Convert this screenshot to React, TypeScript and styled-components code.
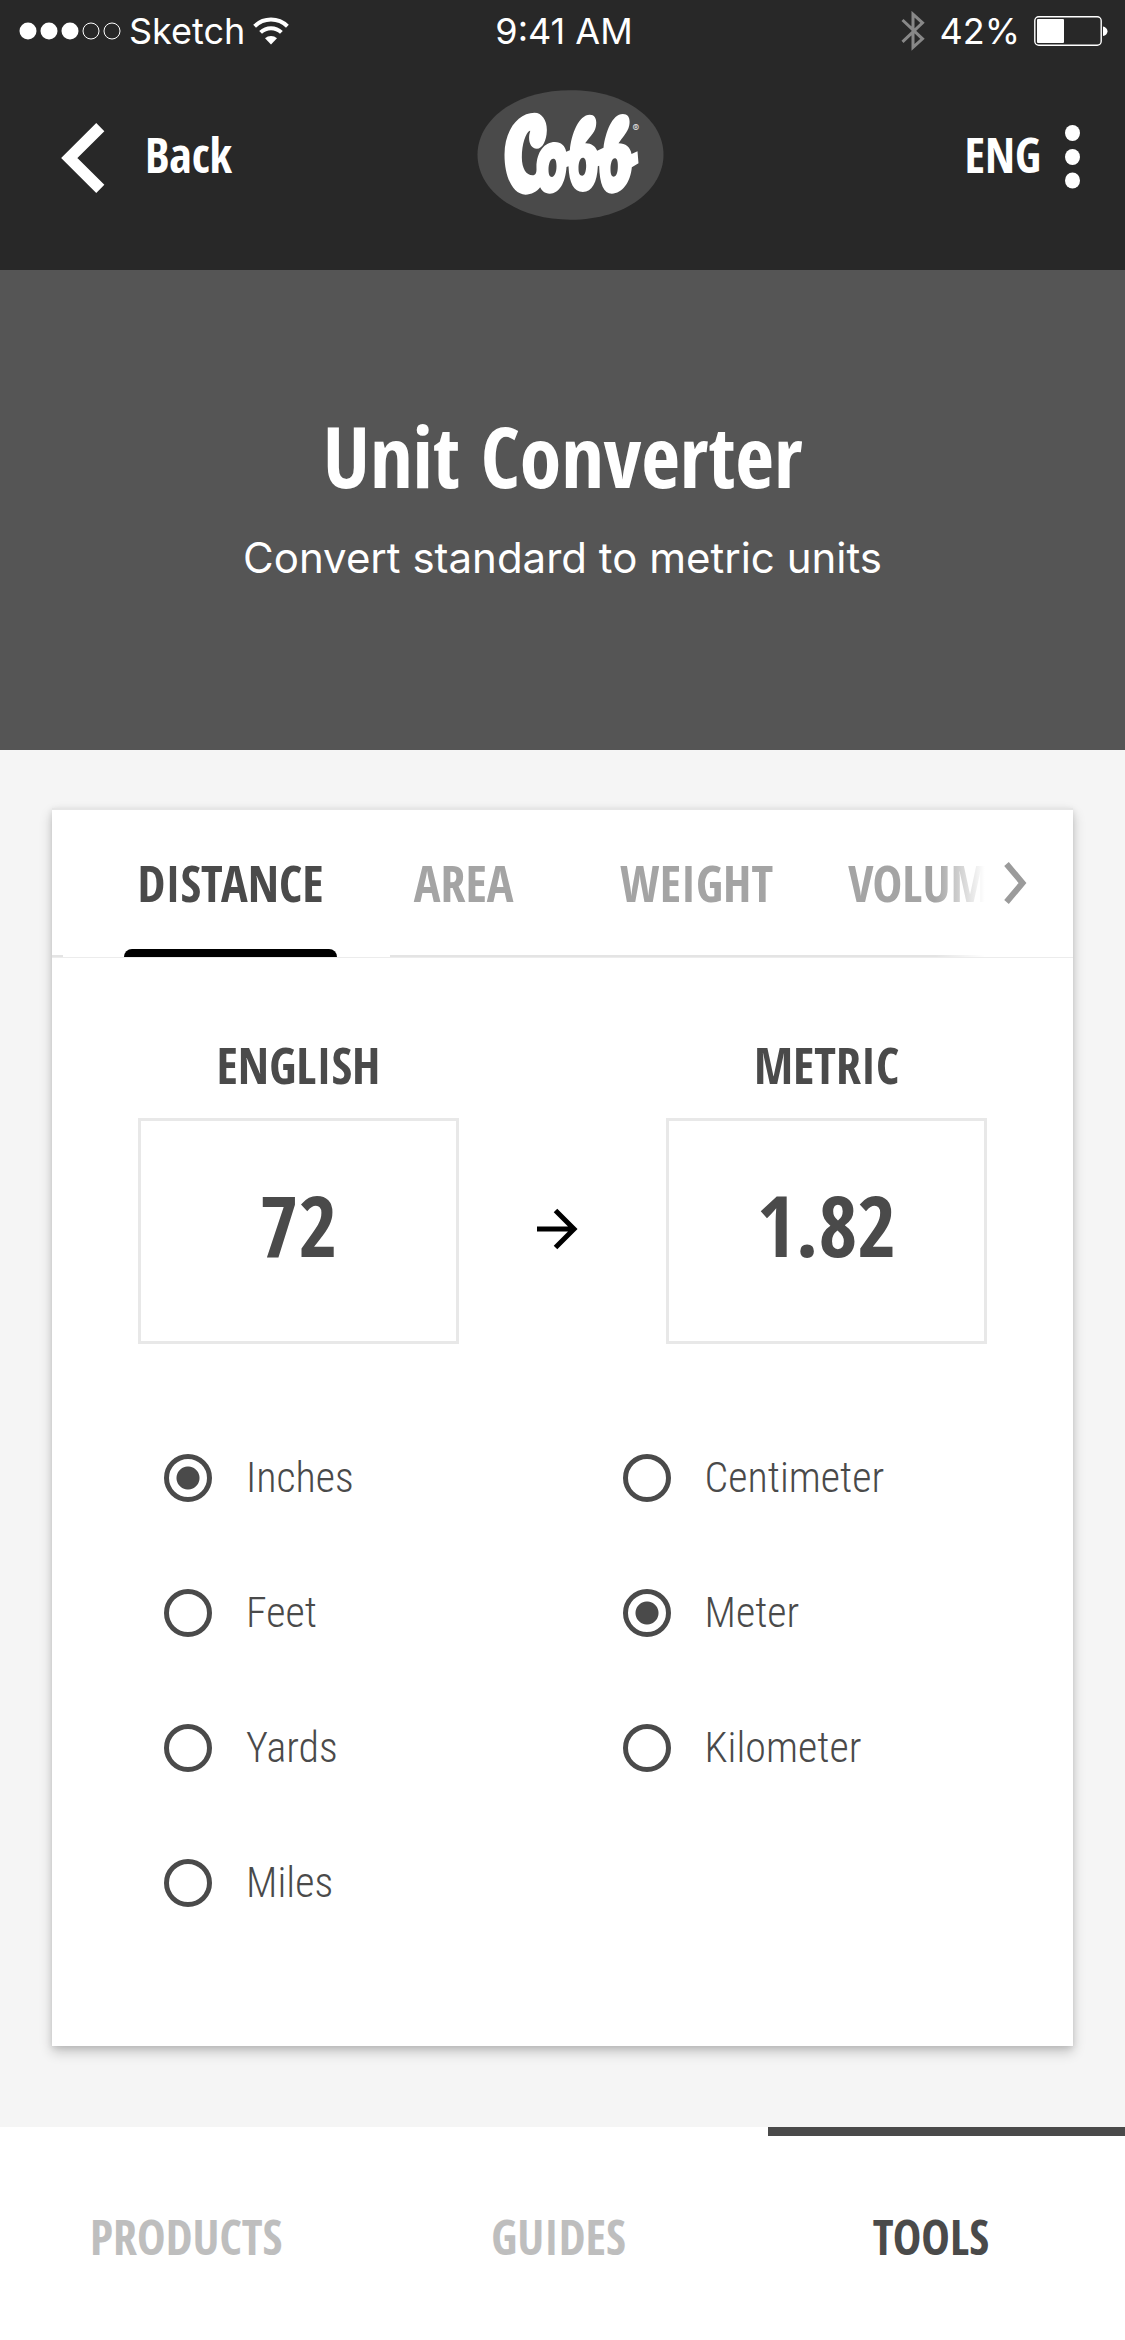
import React, { useState } from 'react';
import styled, { createGlobalStyle } from 'styled-components';

const sans = 'Inter, "Liberation Sans", sans-serif';
const condensed = '"Open Sans Condensed", "Roboto Condensed", sans-serif';
const narrow = '"Roboto Condensed", Roboto, sans-serif';
const ink = '#4a4a4a';

const GlobalStyle = createGlobalStyle`
  *, *::before, *::after { box-sizing: border-box; }
  body { margin: 0; background: #f5f5f5; font-family: ${sans}; }
  h1, h2, p { margin: 0; font-weight: inherit; }
  button, input { font: inherit; color: inherit; margin: 0; padding: 0; border: 0; background: none; border-radius: 0; }
  button { cursor: pointer; }
  svg { display: block; flex: none; }
`;

const Page = styled.div`
  display: flex;
  flex-direction: column;
  min-height: 100vh;
`;

const Header = styled.header`
  background: #282828;
  color: #fff;
  padding-bottom: 22px;
`;

const StatusBar = styled.div`
  display: grid;
  grid-template-columns: 1fr auto 1fr;
  align-items: center;
  height: 62px;
  padding: 0 16px 0 19px;
  font-size: 36px;
  line-height: 44px;
`;

const StatusGroup = styled.div<{ $end?: boolean }>`
  display: flex;
  align-items: center;
  justify-content: ${p => (p.$end ? 'flex-end' : 'flex-start')};
  gap: ${p => (p.$end ? 14 : 8)}px;
`;

const Toolbar = styled.div`
  display: grid;
  grid-template-columns: 1fr auto 1fr;
  align-items: center;
  height: 186px;
  padding: 0 45px 0 61px;
`;

const ToolbarButton = styled.button<{ $gap: number; $end?: boolean }>`
  display: flex;
  align-items: center;
  gap: ${p => p.$gap}px;
  justify-self: ${p => (p.$end ? 'end' : 'start')};
  font: 700 48px/60px ${condensed};
`;

const Hero = styled.section`
  display: flex;
  flex-direction: column;
  align-items: center;
  gap: 20px;
  height: 480px;
  padding-top: 130px;
  background: #555;
  color: #fff;
  text-align: center;
`;

const Title = styled.h1`
  font: 700 84px/112px ${condensed};
`;

const Subtitle = styled.p`
  font-size: 42px;
  line-height: 52px;
`;

const Main = styled.main`
  flex: 1;
  padding: 58px 52px 81px;
`;

const Card = styled.section`
  background: #fff;
  box-shadow: 0 6px 12px rgba(0, 0, 0, 0.2), 0 2px 6px rgba(0, 0, 0, 0.1);
`;

const TabBar = styled.div`
  position: relative;
  border-top: 2px solid #e6e6e6;
  border-bottom: 1px solid #ececec;
  background: linear-gradient(to right, #e4e4e4 11px, transparent 11px, transparent 338px, #e4e4e4 338px)
    bottom / 100% 2px no-repeat;
`;

const TabList = styled.div`
  display: flex;
  height: 147px;
  padding-left: 62px;
  overflow: hidden;
`;

const Tab = styled.button<{ $active: boolean }>`
  flex: 0 0 24.3%;
  display: flex;
  flex-direction: column;
  align-items: center;
  padding: 41px 10px 0;
  font: 700 50px/64px ${condensed};
  color: ${p => (p.$active ? ink : '#a4a4a4')};

  &::after {
    content: '';
    align-self: stretch;
    height: 8px;
    margin-top: auto;
    border-radius: 8px 8px 0 0;
    background: ${p => (p.$active ? '#000' : 'transparent')};
  }
`;

const MoreTabs = styled.button`
  position: absolute;
  top: 0;
  right: 0;
  bottom: 0;
  width: 138px;
  display: flex;
  align-items: center;
  justify-content: flex-end;
  padding: 0 46px 2px 0;
  background: linear-gradient(to right, rgba(255, 255, 255, 0), #fff 36%);
`;

const Converter = styled.div`
  display: flex;
  align-items: flex-end;
  padding: 77px 86px 0;
`;

const Quantity = styled.div`
  flex: 1;
  min-width: 0;
  display: flex;
  flex-direction: column;
  gap: 23px;
  color: ${ink};
`;

const QuantityLabel = styled.label`
  font: 700 50px/60px ${condensed};
  text-align: center;
`;

const QuantityInput = styled.input`
  width: 100%;
  height: 226px;
  padding-bottom: 14px;
  border: 3px solid #e8e8e8;
  font: 700 84px/112px ${condensed};
  text-align: center;
`;

const ArrowCell = styled.div`
  flex: 0 0 207px;
  height: 226px;
  padding-bottom: 4px;
  display: flex;
  align-items: center;
  justify-content: center;
`;

const Units = styled.div`
  display: grid;
  grid-template-columns: 1fr 1fr;
  gap: 8px;
  padding: 110px 0 139px 112px;
`;

const UnitGroup = styled.div`
  display: flex;
  flex-direction: column;
  gap: 87px;
`;

const UnitOption = styled.label`
  display: flex;
  align-items: center;
  gap: 34px;
  height: 48px;
  color: ${ink};
  font: 300 42px/48px ${narrow};
  cursor: pointer;
`;

const Radio = styled.input`
  appearance: none;
  flex: none;
  width: 48px;
  height: 48px;
  border: 5px solid ${ink};
  border-radius: 50%;

  &:checked {
    background: radial-gradient(circle, ${ink} 11px, transparent 12px);
  }
`;

const BottomNav = styled.nav`
  position: relative;
  display: grid;
  grid-template-columns: repeat(3, 1fr);
  height: 213px;
  padding-right: 8px;
  background: #fff;

  &::before {
    content: '';
    position: absolute;
    top: 0;
    right: 0;
    width: 357px;
    height: 9px;
    background: ${ink};
  }
`;

const NavLink = styled.a<{ $active?: boolean }>`
  display: flex;
  align-items: center;
  justify-content: center;
  padding-top: 6px;
  font: 700 48px/60px ${condensed};
  color: ${p => (p.$active ? ink : '#bebebe')};
  text-decoration: none;
`;

const SignalDots = () => (
  <svg width="102" height="18" viewBox="0 0 102 18" aria-hidden="true">
    {[0, 1, 2, 3, 4].map(i => (
      <circle key={i} cx={9 + i * 21} cy="9" r={i < 3 ? 8.5 : 8} fill={i < 3 ? '#fff' : 'none'} stroke="#fff" strokeWidth={i < 3 ? 0 : 1} />
    ))}
  </svg>
);

const Wifi = () => (
  <svg width="36" height="28" viewBox="0 0 36 28" fill="none" stroke="#fff" strokeWidth="4" aria-hidden="true">
    <path d="M1.6 9.2a23.5 23.5 0 0 1 32.8 0" />
    <path d="M7.6 15.4a15 15 0 0 1 20.8 0" />
    <path d="M18 27.5l-6-6.2a8.8 8.8 0 0 1 12 0z" fill="#fff" stroke="none" />
  </svg>
);

const Bluetooth = () => (
  <svg width="24" height="40" viewBox="0 0 24 40" fill="none" stroke="#888" strokeWidth="3" aria-hidden="true">
    <path d="M1.5 9 21.5 27.8 12 36.4V3.2l9.5 8.6L1.5 30.8" />
  </svg>
);

const Battery = () => (
  <svg width="75" height="30" viewBox="0 0 75 30" aria-hidden="true">
    <rect x="0.8" y="0.8" width="66.4" height="28.4" rx="4" fill="none" stroke="#fff" strokeWidth="1.4" />
    <rect x="3" y="3" width="27" height="24" rx="1" fill="#fff" />
    <path d="M69 10.5c2.5.3 4.5 2.5 4.5 4.800s-2 4.500-4.500 4.800z" fill="#fff" />
  </svg>
);

const BackIcon = () => (
  <svg width="44" height="76" viewBox="0 -6 44 76" fill="none" stroke="#fff" strokeWidth="11.5" aria-hidden="true">
    <path d="M39.3 4.2 8.300 35l31 30.800" />
  </svg>
);

const DotsIcon = () => (
  <svg width="15" height="68" viewBox="0 -4 15 68" fill="#fff" aria-hidden="true">
    {[8, 32, 55.5].map(y => <ellipse key={y} cx="7.5" cy={y} rx="7.5" ry="8" />)}
  </svg>
);

const Logo = () => (
  <svg width="187" height="130" viewBox="110 268 560 390" role="img" aria-label="Cobb">
    <path fill="#4a4a4a" d="M390 269C560 269 669 360 669 462S560 657 390 657 111 564 111 462s109-193 279-193z" />
    <path
      fill="#fff"
      fillRule="evenodd"
      d="M282 336c23 0 38 24 37 54s-13 54-30 54-25-19-23-39c1-9 5-15 2-15-12 5-24 40-24 80 0 35 14 54 32 54 10 0 12-9 12-19-2-50 24-81 55-81 19 0 31 12 34 29l11-4c4-49 27-107 60-107 17 0 22 16 18 36s-22 34-32 50c18-1 31 10 36 22l19-9c6-46 26-101 58-101 18 0 23 15 19 35s-22 37-32 53c21 0 36 12 39 32l18-8 3 36-20 12c-4 45-29 79-60 79-24 0-37-29-38-84l-4 2c-2 48-17 77-45 77-27 0-41-26-43-77l-6 2c-3 49-23 80-50 80-16 0-24-9-29-19-9 13-27 22-44 22-37 0-63-52-63-120 0-72 40-126 90-126z
         M338 474c-8 0-14 14-14 32s4 23 10 23c8 0 14-14 14-32s-4-23-10-23z
         M427 471c-8 0-13 13-13 31s4 23 11 23 12-12 12-30-4-24-10-24z
         M523 473c-8 0-13 14-13 32s4 23 10 23c8 0 12-14 12-31s-3-24-9-24z"
    />
    <text x="586" y="395" fill="#e4e4e4" fontFamily={sans} fontSize="30" textAnchor="middle">®</text>
  </svg>
);

const MoreIcon = () => (
  <svg width="23" height="42" viewBox="0 0 23 42" fill="none" stroke="#9b9b9b" strokeWidth="6" aria-hidden="true">
    <path d="M2.5 2 18.5 21 2.5 40" />
  </svg>
);

const ArrowIcon = () => (
  <svg width="52" height="42" viewBox="0 0 52 42" fill="none" stroke="#000" strokeWidth="5" aria-hidden="true">
    <path d="M0 21h37M18.5 2.500 37 21 18.500 39.500" />
  </svg>
);

const TABS = ['DISTANCE', 'AREA', 'WEIGHT', 'VOLUME'];

const METERS: Record<string, number> = {
  Inches: 0.0254,
  Feet: 0.3048,
  Yards: 0.9144,
  Miles: 1609.344,
  Centimeter: 0.01,
  Meter: 1,
  Kilometer: 1000,
};

const ENGLISH_UNITS = ['Inches', 'Feet', 'Yards', 'Miles'];
const METRIC_UNITS = ['Centimeter', 'Meter', 'Kilometer'];

type UnitListProps = { name: string; units: string[]; value: string; onChange: (unit: string) => void };

const UnitList = ({ name, units, value, onChange }: UnitListProps) => (
  <UnitGroup role="radiogroup" aria-label={name}>
    {units.map(unit => (
      <UnitOption key={unit}>
        <Radio type="radio" name={name} checked={unit === value} onChange={() => onChange(unit)} />
        {unit}
      </UnitOption>
    ))}
  </UnitGroup>
);

export default function App() {
  const [tab, setTab] = useState('DISTANCE');
  const [amount, setAmount] = useState('72');
  const [from, setFrom] = useState('Inches');
  const [to, setTo] = useState('Meter');

  const converted = (Number(amount) * METERS[from]) / METERS[to];
  const result = String(Math.floor(converted * 100) / 100);

  return (
    <Page>
      <GlobalStyle />
      <Header>
        <StatusBar>
          <StatusGroup>
            <SignalDots />
            <span>Sketch</span>
            <Wifi />
          </StatusGroup>
          <span>9:41 AM</span>
          <StatusGroup $end>
            <Bluetooth />
            <span>42%</span>
            <Battery />
          </StatusGroup>
        </StatusBar>
        <Toolbar>
          <ToolbarButton type="button" $gap={40}>
            <BackIcon />
            Back
          </ToolbarButton>
          <Logo />
          <ToolbarButton type="button" $gap={24} $end>
            ENG
            <DotsIcon />
          </ToolbarButton>
        </Toolbar>
      </Header>

      <Hero>
        <Title>Unit Converter</Title>
        <Subtitle>Convert standard to metric units</Subtitle>
      </Hero>

      <Main>
        <Card>
          <TabBar>
            <TabList role="tablist">
              {TABS.map(name => (
                <Tab key={name} type="button" role="tab" aria-selected={name === tab} $active={name === tab} onClick={() => setTab(name)}>
                  {name}
                </Tab>
              ))}
            </TabList>
            <MoreTabs type="button" aria-label="More units">
              <MoreIcon />
            </MoreTabs>
          </TabBar>

          <Converter>
            <Quantity>
              <QuantityLabel htmlFor="english">ENGLISH</QuantityLabel>
              <QuantityInput id="english" inputMode="decimal" value={amount} onChange={e => setAmount(e.target.value)} />
            </Quantity>
            <ArrowCell>
              <ArrowIcon />
            </ArrowCell>
            <Quantity>
              <QuantityLabel htmlFor="metric">METRIC</QuantityLabel>
              <QuantityInput id="metric" readOnly value={result} />
            </Quantity>
          </Converter>

          <Units>
            <UnitList name="English unit" units={ENGLISH_UNITS} value={from} onChange={setFrom} />
            <UnitList name="Metric unit" units={METRIC_UNITS} value={to} onChange={setTo} />
          </Units>
        </Card>
      </Main>

      <BottomNav>
        <NavLink href="#products">PRODUCTS</NavLink>
        <NavLink href="#guides">GUIDES</NavLink>
        <NavLink href="#tools" $active aria-current="page">TOOLS</NavLink>
      </BottomNav>
    </Page>
  );
}
